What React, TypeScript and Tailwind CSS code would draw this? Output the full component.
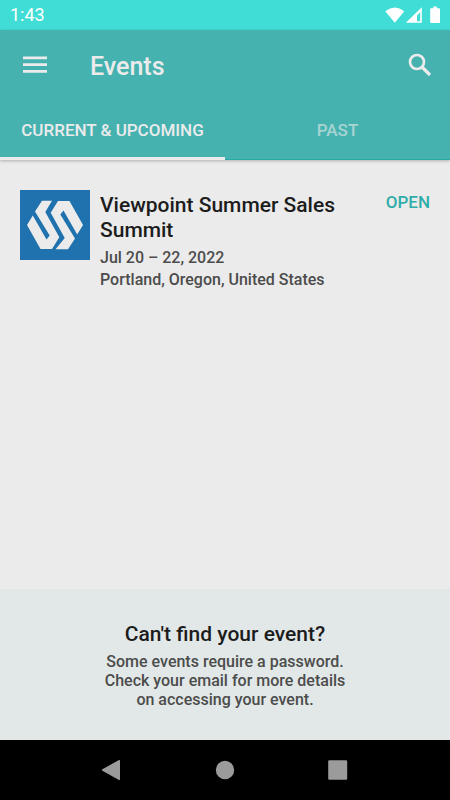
import React, { useState } from 'react';

type Tab = 'current' | 'past';

interface EventItem {
  id: string;
  name: string;
  dates: string;
  location: string;
}

const currentEvents: EventItem[] = [
  {
    id: 'viewpoint-summit',
    name: 'Viewpoint Summer Sales Summit',
    dates: 'Jul 20 – 22, 2022',
    location: 'Portland, Oregon, United States',
  },
];

const StatusBar: React.FC = () => (
  <div className="flex h-[30px] shrink-0 items-center justify-between bg-[#40ddd6] pr-[9px] pl-2.5 text-white">
    <span className="text-lg leading-6">1:43</span>
    <svg className="h-[30px] w-14" viewBox="385 0 56 30" fill="currentColor" aria-hidden="true">
      <path d="M385.3 11.2Q394.8 3.8 404.3 11.2L394.8 22.8z" />
      <path d="M421.8 7.2V22.8H405.8zM420.2 12.2L417 15.4V21.2H420.2z" fillRule="evenodd" />
      <path d="M431 8.2h2.3V6.6h3.6v1.6h2.3q.8 0 .8.8v13.2q0 .8-.8.8H431q-.8 0-.8-.8V9q0-.8.8-.8z" />
    </svg>
  </div>
);

const EventLogo: React.FC = () => (
  <svg className="h-[70px] w-[70px] shrink-0" viewBox="0 0 70 70" aria-hidden="true">
    <path d="M0 0h70v70H0z" fill="#1f72ae" />
    <g fill="#ebebeb">
      <path d="M15 21.5L22 10.7H32L25.3 22L39.3 47.2L32 59H20.5L7 35L12.8 25.5L26.5 49.5L29.7 45.5z" />
      <path d="M55 48.5L48 59.3H35.6L44.7 48L30.7 22.8L38 11H49.5L63 35L57.2 44.5L43.5 20.5L40.3 24.5z" />
    </g>
  </svg>
);

export default function App() {
  const [tab, setTab] = useState<Tab>('current');
  const events = tab === 'current' ? currentEvents : [];

  return (
    <div className="flex min-h-screen flex-col bg-[#ebebeb] font-['Roboto',sans-serif]">
      <StatusBar />

      <header className="relative bg-[#46b2b0] text-[#ebebeb] shadow-[inset_0_-1px_0_#27a9a6,0_1px_3px_rgba(0,0,0,0.25)]">
        <div className="flex h-[70px] items-center pr-[18px] pl-[23px]">
          <button type="button" aria-label="Open menu">
            <svg className="h-6 w-6" viewBox="0 0 24 24" fill="currentColor">
              <path d="M0 3.5h24v2.7H0zM0 10.3h24V13H0zM0 17h24v2.7H0z" />
            </svg>
          </button>
          <h1 className="ml-[43px] flex-1 pt-1 text-[25px] leading-8 font-medium">Events</h1>
          <button type="button" aria-label="Search">
            <svg className="h-6 w-6" viewBox="0 0 24 24" fill="none" stroke="currentColor">
              <circle cx="9" cy="9" r="7" strokeWidth="2.7" />
              <path d="M14 14L22 22" strokeWidth="3.2" />
            </svg>
          </button>
        </div>
        <div className="flex h-[60px] text-[17px] leading-6 font-medium" role="tablist">
          <button
            type="button"
            role="tab"
            aria-selected={tab === 'current'}
            onClick={() => setTab('current')}
            className={`flex-1 border-b-3 pt-0.5 ${tab === 'current' ? 'border-[#ebebeb]' : 'border-transparent text-[#ebebeb]/60'}`}
          >
            CURRENT &amp; UPCOMING
          </button>
          <button
            type="button"
            role="tab"
            aria-selected={tab === 'past'}
            onClick={() => setTab('past')}
            className={`flex-1 border-b-3 pt-0.5 ${tab === 'past' ? 'border-[#ebebeb]' : 'border-transparent text-[#ebebeb]/60'}`}
          >
            PAST
          </button>
        </div>
      </header>

      <main className="flex-1 px-5 pt-[30px]">
        {events.map((event) => (
          <article key={event.id} className="flex items-start gap-2.5">
            <EventLogo />
            <div className="min-w-0 flex-1 pt-[3px]">
              <h2 className="text-[21px] leading-[25px] font-medium text-[#1c1c1c]">{event.name}</h2>
              <div className="mt-1 text-base leading-[22px] font-medium text-[#4c4c4c]">
                <p>{event.dates}</p>
                <p>{event.location}</p>
              </div>
            </div>
            <button type="button" className="text-[17px] leading-6 font-medium text-[#2fada9]">
              OPEN
            </button>
          </article>
        ))}
      </main>

      <section className="bg-[#e1e8e7] pt-[33px] pb-[31px] text-center">
        <h2 className="text-[21px] leading-[25px] font-medium text-[#1c1c1c]">Can't find your event?</h2>
        <p className="mx-auto mt-[5px] max-w-[260px] text-base leading-[19px] font-medium text-[#4c4c4c]">
          Some events require a password. Check your email for more details on accessing your event.
        </p>
      </section>

      <nav className="flex h-[60px] shrink-0 items-center justify-center gap-[89px] bg-black text-[#9b9b9b]">
        <button type="button" aria-label="Back">
          <svg className="h-6 w-6" viewBox="0 0 24 24" fill="currentColor">
            <path d="M2.4 11.3L19 2Q20 1.6 20 2.6V21.4Q20 22.4 19 22L2.4 12.7Q1.4 12 2.4 11.3z" />
          </svg>
        </button>
        <button type="button" aria-label="Home">
          <svg className="h-6 w-6" viewBox="0 0 24 24" fill="currentColor">
            <circle cx="12" cy="12" r="9.2" />
          </svg>
        </button>
        <button type="button" aria-label="Recent apps">
          <svg className="h-6 w-6" viewBox="0 0 24 24" fill="currentColor">
            <rect x="2.2" y="2.3" width="19" height="19.4" rx="1.2" />
          </svg>
        </button>
      </nav>
    </div>
  );
}
